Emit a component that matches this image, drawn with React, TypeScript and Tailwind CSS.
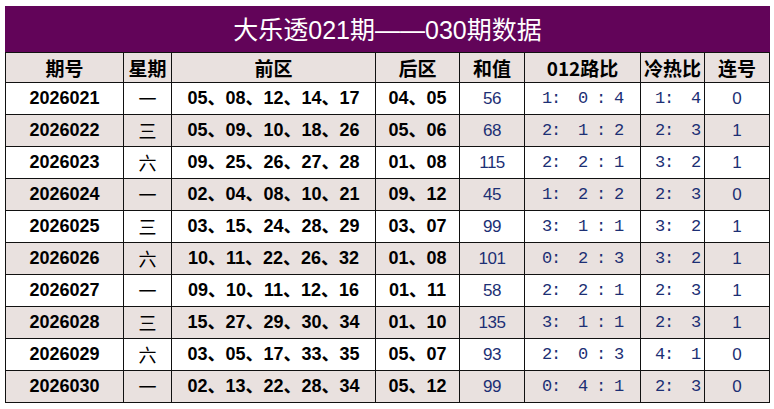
import React from "react";

const rows: [string, string, string, string, string, string, string, string][] = [
  ["2026021", "一", "05、08、12、14、17", "04、05", "56", "1:  0 : 4", "1:  4", "0"],
  ["2026022", "三", "05、09、10、18、26", "05、06", "68", "2:  1 : 2", "2:  3", "1"],
  ["2026023", "六", "09、25、26、27、28", "01、08", "115", "2:  2 : 1", "3:  2", "1"],
  ["2026024", "一", "02、04、08、10、21", "09、12", "45", "1:  2 : 2", "2:  3", "0"],
  ["2026025", "三", "03、15、24、28、29", "03、07", "99", "3:  1 : 1", "3:  2", "1"],
  ["2026026", "六", "10、11、22、26、32", "01、08", "101", "0:  2 : 3", "3:  2", "1"],
  ["2026027", "一", "09、10、11、12、16", "01、11", "58", "2:  2 : 1", "2:  3", "1"],
  ["2026028", "三", "15、27、29、30、34", "01、10", "135", "3:  1 : 1", "2:  3", "1"],
  ["2026029", "六", "03、05、17、33、35", "05、07", "93", "2:  0 : 3", "4:  1", "0"],
  ["2026030", "一", "02、13、22、28、34", "05、12", "99", "0:  4 : 1", "2:  3", "0"],
];

const headers = ["期号", "星期", "前区", "后区", "和值", "012路比", "冷热比", "连号"];
const widths = [118, 48, 204, 84, 65, 116, 64, 65];

const sans = "font-['Liberation_Sans','Noto_Sans_CJK_SC',sans-serif]";
const cjk = "font-['Noto_Sans_CJK_SC',sans-serif]";
const mono = "font-['Liberation_Mono','Noto_Sans_CJK_SC',monospace]";

export default function App() {
  return (
    <div className="w-[774px] h-[409px] bg-white pt-[6px] pl-[5px]">
      <div
        className={`w-[765px] h-[46px] bg-[#620459] text-white text-[25px] flex items-center justify-center pt-[4px] ${sans}`}
      >
        大乐透021期——030期数据
      </div>
      <table className="border-collapse table-fixed w-[765px]">
        <colgroup>
          {widths.map((w, i) => (
            <col key={i} style={{ width: w }} />
          ))}
        </colgroup>
        <thead>
          <tr className="h-[30px] bg-[#e9e1df]">
            {headers.map((h, i) => (
              <th
                key={i}
                className={`border border-[#111] p-0 text-[19px] font-bold text-black leading-none text-center ${cjk}`}
              >
                {h}
              </th>
            ))}
          </tr>
        </thead>
        <tbody>
          {rows.map((r, ri) => (
            <tr key={ri} className={`h-[32px] ${ri % 2 === 1 ? "bg-[#e9e1df]" : "bg-white"}`}>
              <td className={`border border-[#111] p-0 text-center text-[18px] font-bold text-black ${sans}`}>{r[0]}</td>
              <td className={`border border-[#111] p-0 text-center text-[18px] text-black ${cjk}`}>{r[1]}</td>
              <td className={`border border-[#111] p-0 text-center text-[18px] font-bold text-black whitespace-nowrap ${sans}`}>{r[2]}</td>
              <td className={`border border-[#111] p-0 text-center text-[18px] font-bold text-black whitespace-nowrap ${sans}`}>{r[3]}</td>
              <td className={`border border-[#111] p-0 text-center text-[17px] text-[#1c2f74] tracking-[-0.5px] ${sans}`}>{r[4]}</td>
              <td className={`border border-[#111] p-0 text-center text-[17px] text-[#1c2f74] whitespace-pre tracking-[-1.2px] ${mono}`}>{r[5]}</td>
              <td className={`border border-[#111] p-0 pl-[10px] text-center text-[17px] text-[#1c2f74] whitespace-pre tracking-[-1.2px] ${mono}`}>{r[6]}</td>
              <td className={`border border-[#111] p-0 text-center text-[17px] text-[#1c2f74] ${sans}`}>{r[7]}</td>
            </tr>
          ))}
        </tbody>
      </table>
    </div>
  );
}
